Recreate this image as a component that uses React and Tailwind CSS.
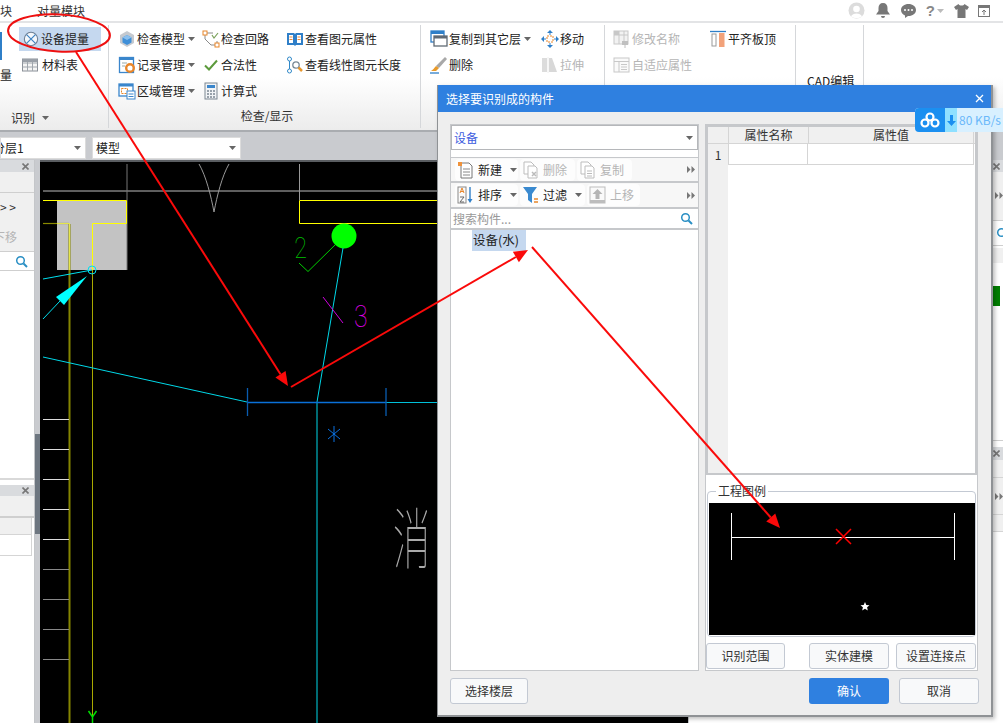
const font = { fontFamily: '"Noto Sans CJK SC", "Liberation Sans", sans-serif' };

const Caret = ({ c = '#666' }) => (
  <svg width="7" height="4" viewBox="0 0 7 4" className="shrink-0"><path d="M0 0h7L3.5 4z" fill={c} /></svg>
);
const DblArrow = () => (
  <svg width="8" height="7" viewBox="0 0 8 7" className="shrink-0"><path d="M0 0l3.5 3.5L0 7zM4.5 0L8 3.5 4.5 7z" fill="#777" /></svg>
);
const Ic = ({ children, s = 18 }) => (
  <svg width={s} height={s} viewBox="0 0 18 18" className="shrink-0" fill="none">{children}</svg>
);
const Search = ({ c = '#2a8fc4' }) => (
  <svg width="13" height="13" viewBox="0 0 13 13" className="shrink-0" fill="none"><circle cx="5.5" cy="5.5" r="3.8" stroke={c} strokeWidth="1.5" /><path d="M8.5 8.5L12 12" stroke={c} strokeWidth="2" /></svg>
);
const Close = ({ c = '#777' }) => (
  <svg width="7" height="7" viewBox="0 0 7 7" className="shrink-0"><path d="M.5.5l6 6M6.5.5l-6 6" stroke={c} strokeWidth="1.6" /></svg>
);

const icons = {
  device: <Ic s={16}><circle cx="9" cy="9" r="7.5" fill="#f4f7fb" stroke="#6d7f95" strokeWidth="1.2" /><path d="M4 4l10 10M14 4L4 14" stroke="#3b82c4" strokeWidth="1.3" /></Ic>,
  table: <Ic><rect x="1.5" y="3" width="15" height="12" fill="#f5f5f5" stroke="#8a9098" /><path d="M1.5 7h15M1.5 11h15M6.5 3v12M11.5 3v12" stroke="#a0a6ad" /><rect x="1.5" y="3" width="15" height="3" fill="#9aa0a8" /></Ic>,
  cube: <Ic><path d="M9 1l7 4v8l-7 4-7-4V5z" fill="#c5c9cf" /><path d="M9 5l4.500 2.400v5L9 15l-4.500-2.600v-5z" fill="#3f8fd8" /><path d="M9 5l4.500 2.400L9 10 4.500 7.400z" fill="#8cc0ee" /></Ic>,
  loop: <Ic><path d="M3 3h8M3 3v6l6 6h6v-4" stroke="#8a8a8a" /><rect x="1" y="1" width="4" height="4" fill="#fff" stroke="#e8862a" /><rect x="13" y="13" width="4" height="4" fill="#fff" stroke="#e8862a" /><path d="M10 5l2 3 4-5" stroke="#7aa05a" strokeWidth="1.2" /></Ic>,
  book: <Ic><path d="M1 3h7l1 1 1-1h7v12h-7l-1 1-1-1H1z" fill="#2f7fc8" /><path d="M3 5h4v8H3zM11 5h4v8h-4z" fill="#fff" /><path d="M3.500 7h3M3.500 9.500h3M11.500 7h3M11.500 9.500h3" stroke="#e98a3c" /></Ic>,
  record: <Ic><rect x="1.500" y="1.500" width="14" height="15" fill="#fff" stroke="#3a86cc" strokeWidth="1.300" /><rect x="1" y="1" width="15" height="3" fill="#3a86cc" /><circle cx="12" cy="12" r="3.800" fill="none" stroke="#e8862a" strokeWidth="2.400" /><path d="M4 7h5M4 10h3" stroke="#9aa" /></Ic>,
  check: <Ic><path d="M3 9.500l4 4 8-9" stroke="#5c9a3c" strokeWidth="2" /></Ic>,
  length: <Ic><circle cx="3.500" cy="3" r="2" stroke="#2f88c8" /><circle cx="3.500" cy="15" r="2" stroke="#2f88c8" /><path d="M3.500 5v8" stroke="#2f88c8" /><circle cx="10" cy="9" r="3.200" stroke="#7a8a96" strokeWidth="1.300" /><path d="M12.500 11.500l3.500 3.500" stroke="#e8962a" strokeWidth="2.500" /></Ic>,
  area: <Ic><rect x="1" y="2" width="14" height="12" fill="#fff" stroke="#3a86cc" strokeWidth="1.300" /><rect x="1" y="2" width="14" height="2.500" fill="#3a86cc" /><rect x="3.500" y="6.500" width="6" height="5" stroke="#e8862a" strokeDasharray="2 1" /><rect x="9" y="9" width="8" height="8" fill="#fff" stroke="#3a86cc" /><path d="M10.500 12h5M10.500 14.500h5" stroke="#3a86cc" /></Ic>,
  calc: <Ic><rect x="3" y="1" width="12" height="16" fill="#f2f4f6" stroke="#7c8792" /><rect x="5" y="3" width="8" height="3" fill="#3a86cc" /><path d="M5 9h2M8 9h2M11 9h2M5 12h2M8 12h2M11 12h2M5 15h2M8 15h2M11 15h2" stroke="#7c8792" strokeWidth="1.500" /></Ic>,
  copy: <Ic><rect x="1" y="1" width="13" height="11" fill="#fff" stroke="#2f7fc8" strokeWidth="1.300" /><rect x="1" y="1" width="13" height="3" fill="#2f7fc8" /><rect x="4" y="6" width="13" height="10" fill="#fff" stroke="#606a74" strokeWidth="1.300" /><rect x="4" y="6" width="13" height="2.500" fill="#606a74" /></Ic>,
  move: <Ic><path d="M9 0l3 3H6zM9 18l-3-3h6zM0 9l3-3v6zM18 9l-3 3V6z" fill="#2f7fc8" /><rect x="6" y="6" width="6" height="6" stroke="#e8862a" strokeDasharray="2 1" /><path d="M9 3v2M9 13v2M3 9h2M13 9h2" stroke="#2f7fc8" /></Ic>,
  brush: <Ic><path d="M15 1l2 2-8 9-3-2z" fill="#a8a8a8" /><path d="M6 10l3 2-3 3H1c2-1 3-3 5-5z" fill="#e89a2a" /><path d="M0 17h9" stroke="#2f7fc8" strokeWidth="1.300" /></Ic>,
  stretch: <Ic><rect x="1" y="2" width="5" height="14" fill="#dcdcdc" /><path d="M8 2h3l5 14H8z" fill="#d8d8d8" /><path d="M7 1v16" stroke="#eee" /></Ic>,
  rename: <Ic><rect x="1" y="1" width="14" height="13" fill="#f2f2f2" stroke="#c8c8c8" /><path d="M1 5h14M6 1v13M11 1v13" stroke="#c8c8c8" /><rect x="1" y="1" width="5" height="4" fill="#c8c8c8" /><rect x="9" y="11" width="6" height="4" fill="#c0c0c0" /><path d="M12 15v3" stroke="#c0c0c0" /></Ic>,
  adapt: <Ic><rect x="1" y="2" width="15" height="14" fill="#fafafa" stroke="#c8c8c8" /><path d="M1 5.500h15M6 5.500V16M8 8.500h6M8 11h6M8 13.500h6" stroke="#c8c8c8" /></Ic>,
  align: <Ic><path d="M1 1.500h16" stroke="#2f7fc8" strokeWidth="1.300" /><rect x="3" y="4" width="4" height="12" fill="#fff" stroke="#9a9a9a" /><rect x="10" y="3" width="5.500" height="14" fill="#f2a27a" /></Ic>,
  neu: <Ic><path d="M4 2h8l3 3v12H4z" fill="#fff" stroke="#777" /><path d="M6 8h7M6 11h7M6 14h7" stroke="#888" /><rect x="1" y="1" width="4" height="4" fill="#f0923a" /></Ic>,
  del: <Ic><path d="M2 1h7l3 3v9H2z" fill="#fff" stroke="#bdbdbd" /><path d="M6 5h7l2 2v10H6z" fill="#fff" stroke="#bdbdbd" /><path d="M10 11l4 4M14 11l-4 4" stroke="#bbb" strokeWidth="1.500" /></Ic>,
  dup: <Ic><path d="M2 1h7l3 3v9H2z" fill="#fff" stroke="#bdbdbd" /><path d="M6 5h7l2 2v10H6z" fill="#fff" stroke="#bdbdbd" /><path d="M8 10h5M8 12.500h5M8 15h5" stroke="#bbb" /></Ic>,
  sort: <Ic><rect x="1" y="1" width="8" height="16" fill="#fafafa" stroke="#8a8a8a" /><path d="M3 7l2-5 2 5M3.500 5.500h3" stroke="#e8862a" /><path d="M3 11h4l-4 5h4" stroke="#666" /><path d="M13 1v14" stroke="#2f7fc8" strokeWidth="1.400" /><path d="M10.500 13l2.500 4 2.500-4z" fill="#2f7fc8" /></Ic>,
  filter: <Ic><path d="M1 1h14L10 8v9l-4-3V8z" fill="#3a8ad0" /><path d="M12 13h4M12 16h4" stroke="#e8862a" strokeWidth="1.300" /></Ic>,
  up: <Ic><rect x="1" y="1" width="15" height="16" fill="#fafafa" stroke="#bdbdbd" /><path d="M8.500 3l5 5h-3v5h-4V8h-3z" fill="#b5b5b5" /><rect x="1" y="14" width="15" height="3" fill="#bdbdbd" /></Ic>,
};

function RItem({ icon, text, caret, dis }) {
  return (
    <div className={`flex items-center h-[26px] gap-[1px] text-[12px] whitespace-nowrap ${dis ? 'text-[#b5b5b5]' : 'text-[#222]'}`}>
      {icons[icon]}
      <span>{text}</span>
      {caret && <span className="ml-[2px]"><Caret /></span>}
    </div>
  );
}

function Sep() {
  return <div className="w-px self-stretch my-[2px] bg-[#d5d7da]" />;
}

function Ribbon() {
  return (
    <div className="h-[109px] flex border-b-2 border-[#a9acb0] bg-gradient-to-b from-white via-white to-[#ececec]">
      <div className="w-[108px] flex flex-col">
        <div className="flex flex-1 pt-[4px]">
          <div className="w-[19px] flex flex-col">
            <div className="w-[2px] h-[28px] mt-[5px] bg-[#2f7fc8]" />
            <div className="text-[12px] text-[#222] mt-[6px]">量</div>
          </div>
          <div className="w-[82px]">
            <div className="h-[24px] flex items-center gap-[2px] bg-[#c5d8ef] pl-[4px] text-[12px] text-[#222]">
              {icons.device}<span>设备提量</span>
            </div>
            <div className="flex items-center gap-[4px] h-[26px] mt-[1px] pl-[2px] text-[12px] text-[#222]">
              {icons.table}<span className="ml-[-1px]">材料表</span>
            </div>
          </div>
        </div>
        <div className="h-[24px] flex items-center pl-[11px] gap-[7px] text-[12px] text-[#333]">识别 <Caret /></div>
      </div>
      <Sep />
      <div className="w-[311px] flex flex-col">
        <div className="flex flex-1 pl-[9px] pt-[3px]">
          <div className="w-[84px]">
            <RItem icon="cube" text="检查模型" caret />
            <RItem icon="record" text="记录管理" caret />
            <RItem icon="area" text="区域管理" caret />
          </div>
          <div className="w-[83px]">
            <RItem icon="loop" text="检查回路" />
            <RItem icon="check" text="合法性" />
            <RItem icon="calc" text="计算式" />
          </div>
          <div className="pl-[1px]">
            <RItem icon="book" text="查看图元属性" />
            <RItem icon="length" text="查看线性图元长度" />
          </div>
        </div>
        <div className="h-[26px] flex items-center justify-center text-[12px] text-[#333] pl-[5px] pb-[3px]">检查/显示</div>
      </div>
      <Sep />
      <div className="w-[183px] flex pl-[9px] pt-[3px]">
        <div className="w-[111px]">
          <RItem icon="copy" text="复制到其它层" caret />
          <RItem icon="brush" text="删除" />
        </div>
        <div>
          <RItem icon="move" text="移动" />
          <RItem icon="stretch" text="拉伸" dis />
        </div>
      </div>
      <Sep />
      <div className="w-[190px] flex pl-[8px] pt-[3px]">
        <div className="w-[97px]">
          <RItem icon="rename" text="修改名称" dis />
          <RItem icon="adapt" text="自适应属性" dis />
        </div>
        <div className="-ml-[1px]">
          <RItem icon="align" text="平齐板顶" />
        </div>
      </div>
      <Sep />
      <div className="w-[67px] pl-[11px] pt-[49px] text-[12px] text-[#222]">CAD编辑</div>
      <Sep />
    </div>
  );
}

function TopBar() {
  return (
    <div className="h-[23px] flex items-center border-b-2 border-[#e3e4e6] bg-white text-[12px] text-[#333] pr-[13px]">
      <span>块</span>
      <span className="ml-[25px]">对量模块</span>
      <div className="ml-auto flex items-center">
        <svg width="17" height="17" viewBox="0 0 17 17"><circle cx="8.500" cy="8.500" r="8" fill="#dcdcdc" /><circle cx="8.500" cy="7" r="3.300" fill="#fff" /><path d="M3 14.500c1.500-4 9.500-4 11 0-3 2-8 2-11 0z" fill="#fff" /></svg>
        <svg className="ml-[11px]" width="14" height="15" viewBox="0 0 14 15"><path d="M7 0c3 0 4.500 2 4.500 5v3L14 11.500H0L2.500 8V5C2.500 2 4 0 7 0zM5 13h4a2 2 0 0 1-4 0z" fill="#777" /></svg>
        <svg className="ml-[11px]" width="15" height="15" viewBox="0 0 15 15"><path d="M7.500 1C11.600 1 15 3.500 15 7s-3.400 6-7.500 6H7l-3 2v-2.600C1.500 11.300 0 9.400 0 7c0-3.500 3.400-6 7.500-6z" fill="#777" /><circle cx="4" cy="7" r="1" fill="#fff" /><circle cx="7.500" cy="7" r="1" fill="#fff" /><circle cx="11" cy="7" r="1" fill="#fff" /></svg>
        <span className="ml-[10px] text-[15px] leading-none font-bold text-[#888]" style={{ fontFamily: '"Liberation Sans", sans-serif' }}>?</span>
        <span className="ml-[2px]"><Caret c="#bbb" /></span>
        <svg className="ml-[10px]" width="15" height="14" viewBox="0 0 15 14"><path d="M4.500 0L0 3l2 3 1.500-1v9h8V5L13 6l2-3-4.500-3C9.500 2 5.500 2 4.500 0z" fill="#777" /></svg>
        <svg className="ml-[9px]" width="12" height="12" viewBox="0 0 12 12" fill="none"><rect x=".5" y=".5" width="11" height="11" stroke="#777" /><rect y="0" width="12" height="3" fill="#777" /><path d="M6 10V5M4 7l2-2 2 2" stroke="#777" /></svg>
      </div>
    </div>
  );
}

function ComboRow() {
  return (
    <div className="h-[28px] bg-[#c9cbcf] flex items-start pt-[5px] gap-[6px]">
      <div className="w-[86px] h-[22px] bg-white border border-[#dcdcdc] flex items-center justify-between pr-[4px] text-[12px] text-[#222] overflow-hidden">
        <span className="-ml-[8px] whitespace-nowrap">分层1</span><Caret />
      </div>
      <div className="w-[149px] h-[22px] bg-white border border-[#dcdcdc] flex items-center justify-between pl-[3px] pr-[4px] text-[12px] text-[#222]">
        <span>模型</span><Caret />
      </div>
    </div>
  );
}

function PanelHead() {
  return (
    <div className="h-[12px] bg-[#d9dbde] flex items-center justify-end pr-[5px]"><Close /></div>
  );
}

function LeftPanel() {
  return (
    <div className="w-[35px] shrink-0 bg-white border-r border-[#c4c6c9] flex flex-col text-[12px] overflow-hidden">
      <PanelHead />
      <div className="h-[21px] bg-[#f0f0f0] border-b border-[#cfcfcf]" />
      <div className="h-[59px] bg-[#f0f0f0] border-b border-[#cfcfcf] pt-[6px]">
        <div className="text-[#333] leading-[16px] whitespace-nowrap">&gt; &gt;</div>
        <div className="text-[#b5b5b5] leading-[16px] mt-[14px] -ml-[7px] whitespace-nowrap">下移</div>
      </div>
      <div className="h-[19px] flex items-center justify-end pr-[6px] border-b border-[#cfcfcf]"><Search /></div>
      <div className="h-[209px] bg-white border-b-2 border-[#d9d9d9]" />
      <div className="h-[5px]" />
      <div className="h-[11px] bg-[#d9dbde] flex items-center justify-end pr-[5px]"><Close /></div>
      <div className="h-[22px] bg-[#f0f0f0] border-b-2 border-[#cfcfcf]" />
      <div className="w-[32px] h-[17px] bg-[#f0f0f0] border-r border-b border-[#d5d5d5]" />
      <div className="w-[32px] h-[21px] border-r border-b border-[#d5d5d5]" />
    </div>
  );
}

function Splitter() {
  return (
    <div className="w-[5px] shrink-0 bg-[#c9cbcf] flex flex-col">
      <div className="h-[274px]" />
      <div className="h-[100px] bg-[#6d7680]" />
    </div>
  );
}

function Cad() {
  const ticks = [[419, '#ddd'], [449, '#ddd'], [479, '#ddd'], [509, '#ddd'], [539, '#ddd'], [569, '#888'], [599, '#888'], [629, '#888'], [659, '#888']];
  return (
    <div className="w-[648px] shrink-0 bg-black border-t-2 border-[#5a5d61]">
      <svg width="648" height="561" viewBox="40 162 648 561" className="block" fill="none">
        <rect x="57" y="201" width="70" height="69" fill="#c3c3c3" />
        <path d="M43 191H437" stroke="#bdbdbd" />
        <path d="M127 164V270" stroke="#777" />
        <path d="M43 200.500H126.500V223.500H92.500V270" stroke="#ffff00" />
        <path d="M43 223.500H69" stroke="#8a8a00" strokeWidth="1.200" />
        <path d="M69.500 224V723" stroke="#858500" strokeWidth="2" />
        <path d="M57 223.500H69.500V270" stroke="#e5e54a" />
        <path d="M92.500 270V723" stroke="#a9a900" />
        <path d="M199 164C206 176 211 196 214 212C217 196 222 176 229 164" stroke="#999" />
        <path d="M299.500 164V200" stroke="#999" />
        <path d="M299.500 200.500H437M299.500 200.500V223.500H437" stroke="#ffff00" />
        <circle cx="344" cy="236" r="12.500" fill="#00ff00" />
        <path d="M335 245L308 271.500L299 263" stroke="#00d000" />
        <text x="294" y="258" fontSize="29" fill="#00c000" style={{ fontFamily: 'Roboto, sans-serif', fontWeight: 100 }} transform="translate(59 0) scale(.8 1)">2</text>
        <path d="M343 248L317 402V723" stroke="#00d8e8" />
        <path d="M323 297L343 323" stroke="#d000e0" />
        <text x="355" y="327" fontSize="31" fill="#e000f0" style={{ fontFamily: 'Roboto, sans-serif', fontWeight: 100 }} transform="translate(70 0) scale(.8 1)">3</text>
        <path d="M43 279L92 270" stroke="#00e0f0" />
        <circle cx="92" cy="270" r="4" stroke="#00e0f0" />
        <path d="M87 276L56 297L64 305z" fill="#00ffff" />
        <path d="M60 301L43 319" stroke="#00e0f0" />
        <path d="M43 357L247 402" stroke="#00d8e8" />
        <path d="M247 402.500H386" stroke="#0a70d8" strokeWidth="1.500" />
        <path d="M386 402.500H437" stroke="#00c0d8" />
        <path d="M247.500 388V416M386 388V416" stroke="#0a5cb0" strokeWidth="1.300" />
        <path d="M334 426V442M328 429L340 439M340 429L328 439" stroke="#0a70e0" />
        <text x="0" y="0" fontSize="44" fill="#aaa" style={{ fontFamily: '"Noto Sans CJK SC", sans-serif', fontWeight: 100 }} transform="translate(393 563) scale(.85 1.500)">消</text>
        {ticks.map(([y, c]) => <path key={y} d={`M43 ${y}.5H69`} stroke={c} />)}
        <path d="M92.500 723V716M88.500 711L92.500 717L96.500 711" stroke="#00e000" strokeWidth="1.500" />
      </svg>
    </div>
  );
}

function RightPanel() {
  return (
    <div className="flex-1 min-w-0 bg-white border-l border-[#c4c6c9] flex flex-col overflow-hidden">
      <div className="h-[12px] bg-[#d9dbde] flex items-center justify-end pr-[3px]"><Close /></div>
      <div className="h-[49px] bg-[#f0f0f0] border-b border-[#cfcfcf] flex items-center justify-end pb-[1px]"><DblArrow /></div>
      <div className="h-[25px] border-b border-[#cfcfcf] flex items-center justify-end -mr-[6px]"><Search /></div>
      <div className="h-[15px] mt-[2px] bg-[#f0f0f0]" />
      <div className="h-[23px] bg-white" />
      <div className="h-[20px] w-[311px] bg-[#007e00]" />
      <div className="h-[135px] bg-white border-b border-[#cfcfcf]" />
      <div className="h-[6px] bg-white" />
      <div className="h-[13px] bg-[#d9dbde] flex items-center justify-end pr-[3px]"><Close /></div>
      <div className="h-[18px] bg-[#f0f0f0] border-b border-[#d5d5d5]" />
      <div className="h-[37px] bg-[#f0f0f0] border-b border-[#d5d5d5] flex items-center justify-end"><DblArrow /></div>
      <div className="h-[17px] bg-[#f0f0f0] border-b border-[#d5d5d5]" />
    </div>
  );
}

function TBtn({ icon, text, caret, dis, w }) {
  return (
    <div className={`h-[22px] flex items-center bg-white/70 rounded-sm pl-[2px] gap-[3px] whitespace-nowrap ${dis ? 'text-[#b5b5b5]' : 'text-[#222]'}`} style={{ width: w }}>
      {icons[icon]}
      <span>{text}</span>
      {caret && <span className="ml-[5px]"><Caret /></span>}
    </div>
  );
}

function Dialog() {
  return (
    <div className="absolute left-[437px] top-[85px] w-[556px] h-[632px] bg-[#eeeeee] border-r-2 border-b-2 border-l border-[#8f9295] shadow-[2px_2px_4px_rgba(0,0,0,.25)] flex flex-col text-[12px]">
      <div className="h-[27px] shrink-0 bg-[#2f80e0] flex items-center justify-between pl-[8px] pr-[7px] text-white">
        <span>选择要识别成的构件</span>
        <svg width="9" height="9" viewBox="0 0 9 9"><path d="M1 1l7 7M8 1l-7 7" stroke="#fff" strokeWidth="1.300" /></svg>
      </div>
      <div className="flex gap-[6px] pl-[12px] pt-[12px]">
        <div className="w-[249px] h-[547px] bg-white border border-[#c6c8cb] flex flex-col">
          <div className="h-[25px] border border-[#b5b7ba] flex items-center justify-between pl-[2px] pr-[4px] text-[12px] text-[#3c5ce0]">
            <span>设备</span><Caret />
          </div>
          <div className="h-[7px]" />
          <div className="h-[26px] bg-[#f7f7f7] border-b-2 border-t border-[#c6c8cb] flex items-center gap-[2px] pl-[4px] pr-[3px]">
            <TBtn icon="neu" text="新建" caret w={63} />
            <TBtn icon="del" text="删除" dis w={55} />
            <TBtn icon="dup" text="复制" dis w={55} />
            <span className="ml-auto"><DblArrow /></span>
          </div>
          <div className="h-[26px] bg-[#f7f7f7] border-b-2 border-[#c6c8cb] flex items-center gap-[2px] pl-[4px] pr-[3px]">
            <TBtn icon="sort" text="排序" caret w={63} />
            <TBtn icon="filter" text="过滤" caret w={65} />
            <TBtn icon="up" text="上移" dis w={53} />
            <span className="ml-auto"><DblArrow /></span>
          </div>
          <div className="h-[21px] border-b-2 border-[#c6c8cb] flex items-center justify-between pl-[2px] pr-[5px] text-[#999] bg-white">
            <span>搜索构件...</span><Search />
          </div>
          <div className="flex-1 pl-[21px]">
            <div className="w-[54px] h-[21px] bg-[#c5d8ef] text-[#222] flex items-center pl-[1px] text-[12.500px]">设备(水)</div>
          </div>
        </div>
        <div className="w-[273px] h-[547px] bg-white border border-[#c6c8cb] flex flex-col">
          <div className="h-[350px] border-2 border-[#c6c8cb] flex flex-col bg-white">
            <div className="h-[17px] shrink-0 bg-[#f0f0f0] border-b border-[#d5d5d5] flex items-center text-[#333]">
              <div className="w-[20px]" />
              <div className="w-[80px] h-full border-l border-[#d5d5d5] flex items-center justify-center">属性名称</div>
              <div className="w-[166px] h-full border-x border-[#d5d5d5] flex items-center justify-center">属性值</div>
            </div>
            <div className="flex flex-1">
              <div className="w-[20px] bg-[#f0f0f0] pt-[1px]">
                <div className="h-[20px] flex items-center justify-center text-[#333]">1</div>
              </div>
              <div className="w-[80px] h-[21px] border-l border-r border-b border-[#d5d5d5]" />
              <div className="w-[166px] h-[21px] border-r border-b border-[#d5d5d5]" />
            </div>
          </div>
          <div className="relative h-[146px] mt-[16px] mx-[1px] rounded-sm border border-[#c3c9d3] pt-[11px] px-[1px]">
            <span className="absolute left-[8px] -top-[9px] bg-white px-[2px] leading-[16px] text-[#333]">工程图例</span>
            <svg width="266" height="132" viewBox="0 0 266 132" className="block bg-black" fill="none">
              <path d="M22.500 10V57M245.500 10V57M23 34.500H245" stroke="#fff" />
              <path d="M127 26L142 41M142 26L127 41" stroke="#ff0000" strokeWidth="1.500" />
              <path d="M156 99l1.300 2.900 3.200.300-2.400 2.100.7 3.100-2.800-1.700-2.800 1.700.7-3.100-2.400-2.100 3.200-.300z" fill="#fff" />
            </svg>
          </div>
          <div className="flex mt-[6px] gap-[7px]">
            <button className="w-[79px] h-[26px] bg-[#f8f9fa] border border-[#c3c9d3] rounded-[3px] text-[#333] mr-[17px]">识别范围</button>
            <button className="w-[80px] h-[26px] bg-[#f8f9fa] border border-[#c3c9d3] rounded-[3px] text-[#333]">实体建模</button>
            <button className="w-[80px] h-[26px] bg-[#f8f9fa] border border-[#c3c9d3] rounded-[3px] text-[#333]">设置连接点</button>
          </div>
        </div>
      </div>
      <div className="flex pl-[12px] pt-[7px]">
        <button className="w-[78px] h-[26px] bg-[#f8f9fa] border border-[#c3c9d3] rounded-[3px] text-[#333]">选择楼层</button>
        <button className="ml-[281px] w-[80px] h-[26px] bg-[#2f80e0] rounded-[3px] text-white">确认</button>
        <button className="ml-[10px] w-[80px] h-[26px] bg-[#f8f9fa] border border-[#c3c9d3] rounded-[3px] text-[#333]">取消</button>
      </div>
    </div>
  );
}

function Netdisk() {
  return (
    <div className="absolute left-[915px] top-[108px] w-[88px] h-[24px] flex rounded-l-[4px] overflow-hidden bg-[#d8f0ff]">
      <div className="w-[30px] bg-[#1b8ff0] flex items-center justify-center">
        <svg width="20" height="16" viewBox="0 0 20 16" fill="none"><circle cx="10" cy="5" r="3.500" stroke="#fff" strokeWidth="2.200" /><circle cx="5" cy="11" r="3.500" stroke="#fff" strokeWidth="2.200" /><circle cx="15" cy="11" r="3.500" stroke="#fff" strokeWidth="2.200" /></svg>
      </div>
      <div className="w-[12px] bg-[#8fe0ff] flex items-center justify-center">
        <svg width="9" height="11" viewBox="0 0 9 11"><path d="M3 0h3v6h3L4.500 11 0 6h3z" fill="#1b8ff0" /></svg>
      </div>
      <div className="pl-[2px] flex items-center text-[12px] text-[#6ab8fa] whitespace-nowrap">80 KB/s</div>
    </div>
  );
}

function Arrow({ x1, y1, x2, y2 }) {
  const a = Math.atan2(y2 - y1, x2 - x1);
  const L = 14, W = 6;
  const bx = x2 - L * Math.cos(a), by = y2 - L * Math.sin(a);
  const px = -Math.sin(a) * W, py = Math.cos(a) * W;
  return (
    <g>
      <path d={`M${x1} ${y1}L${bx} ${by}`} stroke="#fa0a0a" strokeWidth="2" />
      <path d={`M${x2} ${y2}L${bx + px} ${by + py}L${bx - px} ${by - py}z`} fill="#fa0a0a" />
    </g>
  );
}

function Annotations() {
  return (
    <svg className="absolute left-0 top-0 pointer-events-none" width="1003" height="723" viewBox="0 0 1003 723" fill="none">
      <ellipse cx="59" cy="33" rx="51" ry="18.500" stroke="#ee1010" strokeWidth="2" transform="rotate(3 59 33)" />
      <Arrow x1={76} y1={52} x2={288} y2={386} />
      <Arrow x1={291} y1={387} x2={528} y2={250} />
      <Arrow x1={532} y1={247} x2={780} y2={528} />
    </svg>
  );
}

export default function App() {
  return (
    <div className="relative w-[1003px] h-[723px] overflow-hidden bg-white flex flex-col" style={font}>
      <TopBar />
      <Ribbon />
      <ComboRow />
      <div className="flex flex-1 min-h-0">
        <LeftPanel />
        <Splitter />
        <Cad />
        <RightPanel />
      </div>
      <Dialog />
      <Netdisk />
      <Annotations />
    </div>
  );
}
